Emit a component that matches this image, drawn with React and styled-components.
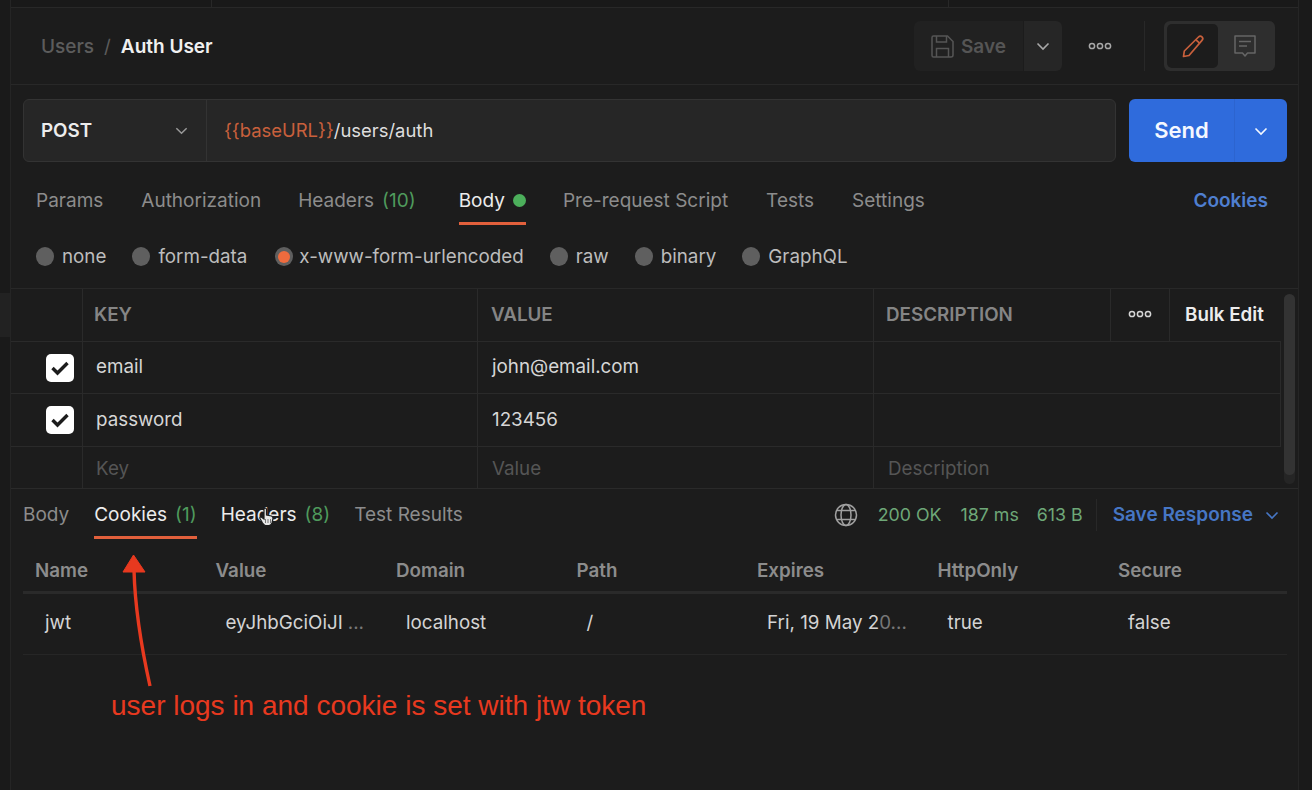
import React from 'react'
import styled, { createGlobalStyle } from 'styled-components'

const Global = createGlobalStyle`
  html, body { margin: 0; padding: 0; background: #1c1c1c; }
  * { box-sizing: border-box; }
`

const Page = styled.div`
  position: relative;
  width: 1312px;
  height: 790px;
  overflow: hidden;
  display: flex;
  background: #1c1c1c;
  color: #e6e6e6;
  font-family: Inter, 'Noto Sans', sans-serif;
  font-size: 18.8px;
`
const Gutter = styled.div`
  position: relative;
  width: 11px;
  flex: none;
  background: #1a1a1a;
  border-right: 1px solid #252525;
  padding-top: 293px;
`
const GutterMark = styled.div`
  width: 10px;
  height: 44px;
  background: #222;
`
const Main = styled.div`
  width: 1288px;
  flex: none;
  display: flex;
  flex-direction: column;
  border-right: 1px solid #252525;
`
const RightEdge = styled.div`
  flex: 1;
  background: #1a1a1a;
`
const TopStrip = styled.div`
  height: 8px;
  flex: none;
  background: #191919;
  border-bottom: 1px solid #282828;
  display: flex;
  padding-left: 200px;
`
const StripTab = styled.div`
  width: 738px;
  border-left: 1px solid #282828;
  border-right: 1px solid #282828;
`
const HeaderBar = styled.div`
  height: 77px;
  flex: none;
  display: flex;
  align-items: center;
  padding: 0 23px 0 30px;
  border-bottom: 1px solid #282828;
`
const Crumb = styled.span`
  font-weight: ${p => (p.$current ? 600 : 500)};
  color: ${p => (p.$current ? '#f0f0f0' : '#5c5c5c')};
  font-size: 19px;
`
const CrumbSlash = styled.span`
  color: #5c5c5c;
  margin: 0 10px 0 10px;
`
const HeaderActions = styled.div`
  margin-left: auto;
  display: flex;
  align-items: center;
`
const SaveButton = styled.div`
  width: 109px;
  height: 50px;
  display: flex;
  align-items: center;
  gap: 7px;
  padding-left: 17px;
  background: #212121;
  border-radius: 6px 0 0 6px;
  color: #555;
  font-weight: 600;
  font-size: 19px;
`
const SaveCaret = styled.div`
  width: 38px;
  height: 50px;
  margin-left: 1px;
  display: flex;
  align-items: center;
  justify-content: center;
  background: #262626;
  border-radius: 0 6px 6px 0;
  color: #a8a8a8;
`
const MoreDots = styled.div`
  width: 76px;
  display: flex;
  justify-content: center;
  color: #a8a8a8;
`
const Divider = styled.div`
  width: 1px;
  height: 50px;
  background: #282828;
  margin: 0 19px 0 6px;
`
const ModeSwitch = styled.div`
  width: 111px;
  height: 50px;
  display: flex;
  padding: 3px;
  background: #2e2e2e;
  border-radius: 6px;
`
const ModeButton = styled.div`
  width: ${p => (p.$active ? 51 : 54)}px;
  height: 44px;
  display: flex;
  align-items: center;
  justify-content: center;
  border-radius: 5px;
  background: ${p => (p.$active ? '#1c1c1c' : 'transparent')};
`
const RequestRow = styled.div`
  height: 63px;
  margin-top: 14px;
  flex: none;
  display: flex;
  padding-left: 12px;
`
const UrlBox = styled.div`
  width: 1093px;
  display: flex;
  align-items: center;
  background: #262626;
  border: 1px solid #333;
  border-radius: 6px;
`
const MethodSelect = styled.div`
  width: 183px;
  height: 100%;
  flex: none;
  display: flex;
  align-items: center;
  justify-content: space-between;
  padding: 0 17px;
  border-right: 1px solid #333;
  font-weight: 600;
  font-size: 18.8px;
  color: #ececec;
`
const UrlText = styled.div`
  padding: 0 0 2px 17px;
  color: #dedede;
  font-size: 18.45px;
`
const UrlVar = styled.span`
  color: #c9603c;
`
const SendGroup = styled.div`
  width: 158px;
  margin-left: 13px;
  display: flex;
  background: #2f6bdc;
  border-radius: 6px;
  color: #f4f8ff;
`
const SendLabel = styled.div`
  width: 106px;
  display: flex;
  align-items: center;
  justify-content: center;
  padding-bottom: 2px;
  font-weight: 600;
  font-size: 22px;
  border-right: 1px solid #2c64cf;
`
const SendCaret = styled.div`
  flex: 1;
  display: flex;
  align-items: center;
  justify-content: center;
`
const TabRow = styled.div`
  height: ${p => p.$h}px;
  margin-top: ${p => p.$mt || 0}px;
  flex: none;
  display: flex;
  align-items: flex-start;
  font-size: 19px;
`
const Tab = styled.div`
  position: relative;
  height: 100%;
  display: flex;
  align-items: center;
  gap: 8px;
  margin-right: ${p => p.$mr || 0}px;
  padding-bottom: ${p => p.$pb || 0}px;
  color: ${p => (p.$lit ? '#ececec' : '#8c8c8c')};
  white-space: nowrap;
  &::after {
    content: '';
    display: ${p => (p.$active ? 'block' : 'none')};
    position: absolute;
    left: 0;
    right: 0;
    bottom: 0;
    height: 3px;
    background: #e2603c;
  }
`
const Count = styled.span`
  color: #4f9a5c;
`
const GreenDot = styled.span`
  width: 13px;
  height: 13px;
  border-radius: 50%;
  background: #4caf5b;
`
const CookiesLink = styled.div`
  margin-left: auto;
  height: 100%;
  display: flex;
  align-items: center;
  padding-bottom: 2px;
  color: #4f7fd0;
  font-weight: 600;
`
const RequestTabs = styled(TabRow)`
  padding: 0 30px 0 25px;
`
const BodyTypes = styled.div`
  height: 64px;
  flex: none;
  display: flex;
  align-items: center;
  padding: 0 0 0 25px;
  border-bottom: 1px solid #282828;
`
const Radio = styled.div`
  display: flex;
  align-items: center;
  gap: 8px;
  margin-right: 26px;
  color: #bdbdbd;
`
const RadioDot = styled.span`
  width: 18px;
  height: 19px;
  margin: ${p => (p.$on ? '0 -2px 0 2px' : '0')};
  border-radius: 50%;
  background: #5f5f5f;
  display: flex;
  align-items: center;
  justify-content: center;
  &::after {
    content: '';
    display: ${p => (p.$on ? 'block' : 'none')};
    width: 12px;
    height: 12px;
    border-radius: 50%;
    background: #ee6b3e;
  }
`
const ParamsArea = styled.div`
  position: relative;
  height: 200px;
  flex: none;
  border-bottom: 1px solid #2a2a2a;
`
const ParamRow = styled.div`
  height: ${p => p.$h}px;
  width: 1270px;
  display: grid;
  grid-template-columns: 71px 395px 396px 1fr;
  border-bottom: ${p => (p.$last ? 'none' : '1px solid #2a2a2a')};
  border-right: ${p => (p.$open ? 'none' : '1px solid #2a2a2a')};
`
const HeaderRow = styled(ParamRow)`
  grid-template-columns: 71px 395px 396px 237px 59px 1fr;
  border-right: none;
`
const ParamCell = styled.div`
  display: flex;
  align-items: center;
  justify-content: ${p => (p.$center ? 'center' : 'flex-start')};
  padding-left: ${p => (p.$center ? 0 : p.$pad || 14)}px;
  padding-top: ${p => p.$pt || 0}px;
  padding-bottom: ${p => p.$pb || 0}px;
  border-left: ${p => (p.$first ? 'none' : '1px solid #2a2a2a')};
  color: ${p => p.$color || '#d6d6d6'};
  font-weight: ${p => p.$weight || 400};
  white-space: nowrap;
`
const CheckBox = styled.div`
  width: 28px;
  height: 28px;
  margin-left: 21px;
  border-radius: 5px;
  background: #fff;
  display: flex;
  align-items: center;
  justify-content: center;
`
const ScrollTrack = styled.div`
  position: absolute;
  top: 5px;
  right: 3px;
  width: 11px;
  height: 190px;
  border-radius: 6px;
  background: #252525;
`
const ScrollThumb = styled.div`
  height: 181px;
  border-radius: 6px;
  background: #333;
`
const ResponseTabs = styled.div`
  height: 51px;
  flex: none;
  display: flex;
  padding-left: 12px;
  padding-right: 18px;
`
const StatusGroup = styled.div`
  margin-left: auto;
  display: flex;
  align-items: center;
  color: #a8a8a8;
`
const StatusText = styled.span`
  color: #6ea878;
  font-size: 17.8px;
  margin-left: ${p => p.$ml}px;
`
const StatusDivider = styled.div`
  width: 1px;
  height: 32px;
  margin: 0 16px 0 13px;
  background: #282828;
`
const SaveResponse = styled.div`
  display: flex;
  align-items: center;
  gap: 11px;
  color: #4676c4;
  font-weight: 600;
  font-size: 19px;
`
const CookieTable = styled.div`
  margin-left: 12px;
  width: 1264px;
`
const CookieHead = styled.div`
  height: 54px;
  padding-top: 10px;
  display: grid;
  grid-template-columns: repeat(7, 180.5px);
  align-items: center;
  border-bottom: 3px solid #2a2a2a;
`
const HeadCell = styled.div`
  padding-left: 12px;
  color: #8c8c8c;
  font-weight: 600;
`
const CookieRow = styled.div`
  height: 61px;
  padding-bottom: 3px;
  display: grid;
  grid-template-columns: repeat(7, 180.5px);
  align-items: center;
  border-bottom: 1px solid #262626;
`
const Cell = styled.div`
  padding-left: 22px;
  color: #d4d4d4;
  white-space: nowrap;
`
const Fade = styled.span`
  color: #777;
  margin-left: ${p => p.$ml || 0}px;
`
const Annotation = styled.div`
  position: absolute;
  left: 111px;
  top: 689px;
  font-family: 'Liberation Sans', Arial, sans-serif;
  font-size: 28px;
  line-height: 34px;
  color: #e8391f;
  white-space: nowrap;
`
const Arrow = styled.svg`
  position: absolute;
  left: 115px;
  top: 550px;
`
const HandCursor = styled.svg`
  position: absolute;
  left: 259px;
  top: 507px;
`

const Caret = ({ size = 16, color = 'currentColor' }) => (
  <svg width={size} height={size} viewBox="0 0 16 16" fill="none" stroke={color} strokeWidth="1.6">
    <path d="M2.5 5.5 8 11l5.5-5.5" />
  </svg>
)

const Dots = () => (
  <svg width="24" height="8" viewBox="0 0 24 8" fill="none" stroke="currentColor" strokeWidth="1.5">
    <circle cx="4" cy="4" r="2.6" />
    <circle cx="12" cy="4" r="2.6" />
    <circle cx="20" cy="4" r="2.6" />
  </svg>
)

const Check = () => (
  <svg width="20" height="16" viewBox="0 0 20 16" fill="none" stroke="#1c1c1c" strokeWidth="3.4">
    <path d="M2.5 8 7.5 13 17.5 3" />
  </svg>
)

const bodyTypes = ['none', 'form-data', 'x-www-form-urlencoded', 'raw', 'binary', 'GraphQL']
const cookieCols = ['Name', 'Value', 'Domain', 'Path', 'Expires', 'HttpOnly', 'Secure']

export default function App() {
  return (
    <Page>
      <Global />
      <Gutter>
        <GutterMark />
      </Gutter>
      <Main>
        <TopStrip>
          <StripTab />
        </TopStrip>
        <HeaderBar>
          <Crumb>Users</Crumb>
          <CrumbSlash>/</CrumbSlash>
          <Crumb $current>Auth User</Crumb>
          <HeaderActions>
            <SaveButton>
              <svg width="23" height="23" viewBox="0 0 23 23" fill="none" stroke="#555" strokeWidth="1.5">
                <path d="M2.5 1h14l5.5 5.5V20a2 2 0 0 1-2 2H2.5A1.5 1.5 0 0 1 1 20.5v-18A1.5 1.5 0 0 1 2.5 1z" />
                <path d="M5.5 1v6h10V1M5.5 22v-8.5h12V22" />
              </svg>
              Save
            </SaveButton>
            <SaveCaret>
              <Caret size={16} />
            </SaveCaret>
            <MoreDots>
              <Dots />
            </MoreDots>
            <Divider />
            <ModeSwitch>
              <ModeButton $active>
                <svg width="24" height="24" viewBox="0 0 24 24" fill="none" stroke="#c9603c" strokeWidth="1.7" strokeLinejoin="round">
                  <path d="M17.5 3a2.4 2.4 0 0 1 3.5 3.4L8 21.5l-5.5 1 .8-5.5z" />
                  <path d="M15 5.8 18.8 9.4" />
                </svg>
              </ModeButton>
              <ModeButton>
                <svg width="24" height="24" viewBox="0 0 24 24" fill="none" stroke="#666" strokeWidth="1.5" strokeLinejoin="round">
                  <path d="M2 2h20v17h-7.5L12 22l-2.5-3H2z" />
                  <path d="M6 7.5h12M6 12h8" />
                </svg>
              </ModeButton>
            </ModeSwitch>
          </HeaderActions>
        </HeaderBar>
        <RequestRow>
          <UrlBox>
            <MethodSelect>
              POST
              <Caret size={15} color="#999" />
            </MethodSelect>
            <UrlText>
              <UrlVar>{'{{baseURL}}'}</UrlVar>/users/auth
            </UrlText>
          </UrlBox>
          <SendGroup>
            <SendLabel>Send</SendLabel>
            <SendCaret>
              <Caret size={16} />
            </SendCaret>
          </SendGroup>
        </RequestRow>
        <RequestTabs $h={48} $mt={15}>
          <Tab $mr={38} $pb={2}>Params</Tab>
          <Tab $mr={37} $pb={2}>Authorization</Tab>
          <Tab $mr={43} $pb={2}>
            Headers <Count>(10)</Count>
          </Tab>
          <Tab $mr={37} $pb={2} $active $lit>
            Body <GreenDot />
          </Tab>
          <Tab $mr={38} $pb={2}>Pre-request Script</Tab>
          <Tab $mr={38} $pb={2}>Tests</Tab>
          <Tab $pb={2}>Settings</Tab>
          <CookiesLink>Cookies</CookiesLink>
        </RequestTabs>
        <BodyTypes>
          {bodyTypes.map(t => (
            <Radio key={t}>
              <RadioDot $on={t === 'x-www-form-urlencoded'} />
              {t}
            </Radio>
          ))}
        </BodyTypes>
        <ParamsArea>
          <HeaderRow $h={53}>
            <ParamCell $first />
            <ParamCell $pad={11} $pb={2} $color="#858585" $weight={600}>KEY</ParamCell>
            <ParamCell $pad={13} $pb={2} $color="#858585" $weight={600}>VALUE</ParamCell>
            <ParamCell $pad={12} $pb={2} $color="#858585" $weight={600}>DESCRIPTION</ParamCell>
            <ParamCell $center $pb={2}><Dots /></ParamCell>
            <ParamCell $pad={15} $pb={2} $color="#ececec" $weight={600}>Bulk Edit</ParamCell>
          </HeaderRow>
          <ParamRow $h={52}>
            <ParamCell $first><CheckBox><Check /></CheckBox></ParamCell>
            <ParamCell $pad={13} $pb={3}>email</ParamCell>
            <ParamCell $pb={3}>john@email.com</ParamCell>
            <ParamCell />
          </ParamRow>
          <ParamRow $h={53}>
            <ParamCell $first><CheckBox><Check /></CheckBox></ParamCell>
            <ParamCell $pad={13} $pb={2}>password</ParamCell>
            <ParamCell $pb={2}>123456</ParamCell>
            <ParamCell />
          </ParamRow>
          <ParamRow $h={41} $last $open>
            <ParamCell $first />
            <ParamCell $pad={13} $pt={2} $color="#555">Key</ParamCell>
            <ParamCell $pt={2} $color="#555">Value</ParamCell>
            <ParamCell $pt={2} $color="#555">Description</ParamCell>
          </ParamRow>
          <ScrollTrack>
            <ScrollThumb />
          </ScrollTrack>
        </ParamsArea>
        <ResponseTabs>
          <TabRow $h={50}>
            <Tab $mr={25}>Body</Tab>
            <Tab $mr={24} $active $lit>
              Cookies <Count>(1)</Count>
            </Tab>
            <Tab $mr={24} $lit>
              Headers <Count>(8)</Count>
            </Tab>
            <Tab>Test Results</Tab>
          </TabRow>
          <StatusGroup>
            <svg width="24" height="24" viewBox="0 0 24 24" fill="none" stroke="#a0a0a0" strokeWidth="1.5">
              <circle cx="12" cy="12" r="10.5" />
              <ellipse cx="12" cy="12" rx="5" ry="10.5" />
              <path d="M3 7.5h18M3 16.5h18" />
            </svg>
            <StatusText $ml={20}>200 OK</StatusText>
            <StatusText $ml={19}>187 ms</StatusText>
            <StatusText $ml={18}>613 B</StatusText>
            <StatusDivider />
            <SaveResponse>
              Save Response
              <Caret size={16} />
            </SaveResponse>
          </StatusGroup>
        </ResponseTabs>
        <CookieTable>
          <CookieHead>
            {cookieCols.map(c => (
              <HeadCell key={c}>{c}</HeadCell>
            ))}
          </CookieHead>
          <CookieRow>
            <Cell>jwt</Cell>
            <Cell>eyJhbGciOiJI<Fade $ml={5}>...</Fade></Cell>
            <Cell>localhost</Cell>
            <Cell>/</Cell>
            <Cell>Fri, 19 May 2<Fade>0...</Fade></Cell>
            <Cell>true</Cell>
            <Cell>false</Cell>
          </CookieRow>
        </CookieTable>
      </Main>
      <RightEdge />
      <Arrow width="40" height="140" viewBox="0 0 40 140" fill="#e8391f" stroke="#e8391f">
        <path d="M8 22 18.5 5 30 22z" strokeWidth="1" strokeLinejoin="round" />
        <path d="M19 20C20 60 27 100 35 136" fill="none" strokeWidth="3.4" />
      </Arrow>
      <HandCursor width="15" height="19" viewBox="0 0 15 19">
        <path d="M5 1.5c1.500-1 2.500 0 2.500 1V8l5 1c1.500.5 1.500 1.500 1.500 2.500L13 16c-.5 1.500-1.500 2.500-3 2.500H6.500c-1.500 0-2-1-3-2.500L1 11.500c-.5-1.500 1-2 2-1l2 1.500z" fill="#e8e8e8" stroke="#1c1c1c" strokeWidth="1.2" />
        <path d="M6.5 12v4M9 12v4M11.500 12v4" stroke="#777" strokeWidth="1" />
      </HandCursor>
      <Annotation>user logs in and cookie is set with jtw token</Annotation>
    </Page>
  )
}
